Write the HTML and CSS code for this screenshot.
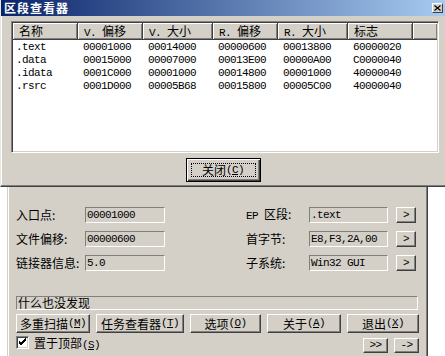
FILE: index.html
```html
<!DOCTYPE html>
<html>
<head>
<meta charset="utf-8">
<link rel="stylesheet" href="styles.css">
</head>
<body>
<div class="main">
  <div class="info">
    <div class="row">
      <div class="half"><span class="lbl lbl-l">入口点:</span><div class="fld mono">00001000</div></div>
      <div class="half"><span class="lbl lbl-r"><span class="lat">EP </span>区段:</span><div class="fld mono fld-r">.text</div><div class="sbtn mono">&gt;</div></div>
    </div>
    <div class="row">
      <div class="half"><span class="lbl lbl-l">文件偏移:</span><div class="fld mono">00000600</div></div>
      <div class="half"><span class="lbl lbl-r">首字节:</span><div class="fld mono fld-r">E8,F3,2A,00</div><div class="sbtn mono">&gt;</div></div>
    </div>
    <div class="row">
      <div class="half"><span class="lbl lbl-l">链接器信息:</span><div class="fld mono">5.0</div></div>
      <div class="half"><span class="lbl lbl-r">子系统:</span><div class="fld mono fld-r">Win32 GUI</div><div class="sbtn mono">&gt;</div></div>
    </div>
  </div>
  <div class="status">什么也没发现</div>
  <div class="btns">
    <div class="btn w1">多重扫描<span class="lat">(<u>M</u>)</span></div>
    <div class="btn w2">任务查看器<span class="lat">(<u>T</u>)</span></div>
    <div class="btn w3">选项<span class="lat">(<u>O</u>)</span></div>
    <div class="btn w4">关于<span class="lat">(<u>A</u>)</span></div>
    <div class="btn w5">退出<span class="lat">(<u>X</u>)</span></div>
  </div>
  <div class="bottom">
    <div class="chk"><svg width="9" height="9" viewBox="0 0 9 9"><path d="M1 3 L3 5 L8 0 M1 4 L3 6 L8 1 M1 5 L3 7 L8 2" stroke="#000" stroke-width="1" fill="none"/></svg></div>
    <span class="chklbl">置于顶部<span class="lat">(<u>S</u>)</span></span>
    <div class="spacer"></div>
    <div class="tbtn mono">&gt;&gt;</div>
    <div class="tbtn mono">-&gt;</div>
  </div>
</div>

<div class="dialog">
  <div class="title">
    <span class="ttext">区段查看器</span>
    <div class="xbtn"><svg width="7" height="6" viewBox="0 0 7 6"><path d="M0.5 0.5 L6.5 5.5 M6.5 0.5 L0.5 5.5" stroke="#000" stroke-width="1.2" fill="none"/></svg></div>
  </div>
  <div class="lv">
    <div class="lvhead">
      <div class="hc c1">名称</div>
      <div class="hc c2"><span class="lat">V. </span>偏移</div>
      <div class="hc c3"><span class="lat">V. </span>大小</div>
      <div class="hc c4"><span class="lat">R. </span>偏移</div>
      <div class="hc c5"><span class="lat">R. </span>大小</div>
      <div class="hc c6">标志</div>
      <div class="hc c7"></div>
    </div>
    <div class="lvbody mono">
      <div class="lr"><span class="c1">.text</span><span class="c2">00001000</span><span class="c3">00014000</span><span class="c4">00000600</span><span class="c5">00013800</span><span class="c6">60000020</span></div>
      <div class="lr"><span class="c1">.data</span><span class="c2">00015000</span><span class="c3">00007000</span><span class="c4">00013E00</span><span class="c5">00000A00</span><span class="c6">C0000040</span></div>
      <div class="lr"><span class="c1">.idata</span><span class="c2">0001C000</span><span class="c3">00001000</span><span class="c4">00014800</span><span class="c5">00001000</span><span class="c6">40000040</span></div>
      <div class="lr"><span class="c1">.rsrc</span><span class="c2">0001D000</span><span class="c3">00005B68</span><span class="c4">00015800</span><span class="c5">00005C00</span><span class="c6">40000040</span></div>
    </div>
  </div>
  <div class="closewrap">
    <div class="cbtn"><div class="focus">关闭<span class="lat">(<u>C</u>)</span></div></div>
  </div>
</div>
</body>
</html>
```

FILE: styles.css
```css
* { box-sizing: border-box; }
html, body { margin: 0; padding: 0; }
body {
  width: 445px;
  height: 356px;
  background: #fff;
  position: relative;
  overflow: hidden;
  font-family: "Noto Sans CJK SC", "Noto Sans", sans-serif;
  font-size: 12px;
  color: #000;
}
.lat, .mono {
  font-family: "Liberation Mono", monospace;
  font-size: 11px;
  letter-spacing: -0.6px;
}
.lat { white-space: pre; }
.mono { white-space: nowrap; }
u { text-decoration: underline; text-underline-offset: 1px; }

/* main window behind */
.main {
  position: absolute;
  left: 7px;
  top: 187px;
  width: 421px;
  height: 180px;
  background: #d4d0c8;
  border-left: 1px solid #d4d0c8;
  border-right: 1px solid #404040;
  box-shadow: inset 1px 0 #fff, inset -1px 0 #808080;
  padding: 20px 7px 0 8px;
}
.info { display: flex; flex-direction: column; gap: 8px; }
.row { display: grid; grid-template-columns: 230px 170px; height: 16px; }
.half { display: flex; align-items: center; height: 16px; }
.lbl { line-height: 16px; white-space: nowrap; }
.lbl-l { width: 69px; }
.lbl-r { width: 63px; }
.fld {
  width: 80px;
  height: 16px;
  border: 1px solid;
  border-color: #808080 #fff #fff #808080;
  padding-left: 1px;
  line-height: 14px;
  overflow: hidden;
}
.fld-r { width: 79px; }
.sbtn {
  width: 20px;
  height: 16px;
  margin-left: 8px;
  border: 1px solid;
  border-color: #fff #404040 #404040 #fff;
  box-shadow: inset -1px -1px #808080;
  text-align: center;
  line-height: 14px;
}
.status {
  margin-top: 25px;
  width: 402px;
  height: 14px;
  border: 1px solid;
  border-color: #808080 #fff #fff #808080;
  line-height: 12px;
  padding-left: 1px;
}
.btns {
  display: flex;
  gap: 6px;
  margin-top: 4px;
  height: 19px;
}
.btn {
  height: 19px;
  border: 1px solid;
  border-color: #fff #404040 #404040 #fff;
  box-shadow: inset -1px -1px #808080;
  display: flex;
  align-items: center;
  justify-content: center;
  line-height: 17px;
  white-space: nowrap;
}
.w1 { width: 74px; }
.w2 { width: 88px; }
.w3 { width: 71px; }
.w4 { width: 74px; }
.w5 { width: 72px; }
.bottom {
  display: flex;
  align-items: flex-start;
  margin-top: 2px;
  height: 18px;
  width: 403px;
}
.chk {
  margin-top: 1px;
  width: 13px;
  height: 13px;
  background: #fff;
  border: 1px solid;
  border-color: #808080 #fff #fff #808080;
  box-shadow: inset 1px 1px #404040, inset -1px -1px #d4d0c8;
  display: flex;
  align-items: center;
  justify-content: center;
}
.chk svg { display: block; }
.chklbl { margin-left: 5px; line-height: 16px; }
.spacer { flex: 1; }
.tbtn {
  margin-top: 3px;
  width: 25px;
  height: 15px;
  margin-left: 6px;
  border: 1px solid;
  border-color: #fff #404040 #404040 #fff;
  box-shadow: inset -1px -1px #808080;
  text-align: center;
  line-height: 13px;
}

/* dialog on top */
.dialog {
  position: absolute;
  left: 0;
  top: 0;
  width: 445px;
  height: 187px;
  background: #d4d0c8;
  border-left: 1px solid #e8e6e0;
  border-bottom: 1px solid #404040;
  box-shadow: inset 0 -1px #808080, inset 1px 0 #fff;
  z-index: 2;
}
.title {
  height: 16px;
  background: linear-gradient(to right, #0a246a, #a6caf0);
  display: flex;
  align-items: center;
  padding-left: 3px;
  position: relative;
}
.ttext {
  color: #fff;
  font-weight: bold;
  font-size: 12px;
  line-height: 16px;
  letter-spacing: 1px;
}
.xbtn {
  position: absolute;
  left: 431px;
  top: 3px;
  width: 11px;
  height: 10px;
  background: #d4d0c8;
  border: 1px solid;
  border-color: #fff #404040 #404040 #fff;
  display: flex;
  align-items: center;
  justify-content: center;
}
.xbtn svg { display: block; }
.lv {
  margin: 5px 0 0 10px;
  width: 428px;
  height: 132px;
  background: #fff;
  border: 1px solid;
  border-color: #808080 #fff #fff #808080;
  box-shadow: inset 1px 1px #404040, inset -1px -1px #d4d0c8;
  padding: 1px;
  overflow: hidden;
}
.lvhead { display: flex; height: 17px; }
.hc {
  height: 17px;
  background: #d4d0c8;
  border-right: 1px solid #404040;
  border-bottom: 1px solid #404040;
  box-shadow: inset 1px 1px #fff, inset -1px -1px #808080;
  padding-left: 6px;
  line-height: 16px;
  white-space: nowrap;
}
.c1 { width: 65px; }
.c2 { width: 65px; }
.c3 { width: 70px; }
.c4 { width: 65px; }
.c5 { width: 70px; }
.c6 { width: 65px; }
.c7 { flex: 1; border-right: none; }
.lvbody { padding-top: 1px; }
.lr { display: flex; height: 13px; line-height: 13px; }
.lr span { display: block; padding-left: 5px; }
.lr span.c1 { padding-left: 3px; }
.closewrap {
  display: flex;
  justify-content: center;
  margin-top: 5px;
}
.cbtn {
  width: 75px;
  height: 24px;
  border: 1px solid #000;
  background: #d4d0c8;
  box-shadow: inset 1px 1px #fff, inset -1px -1px #404040, inset -2px -2px #808080;
  padding: 4px;
}
.focus {
  height: 100%;
  border: 1px dotted #000;
  display: flex;
  align-items: center;
  justify-content: center;
  line-height: 12px;
}
```
